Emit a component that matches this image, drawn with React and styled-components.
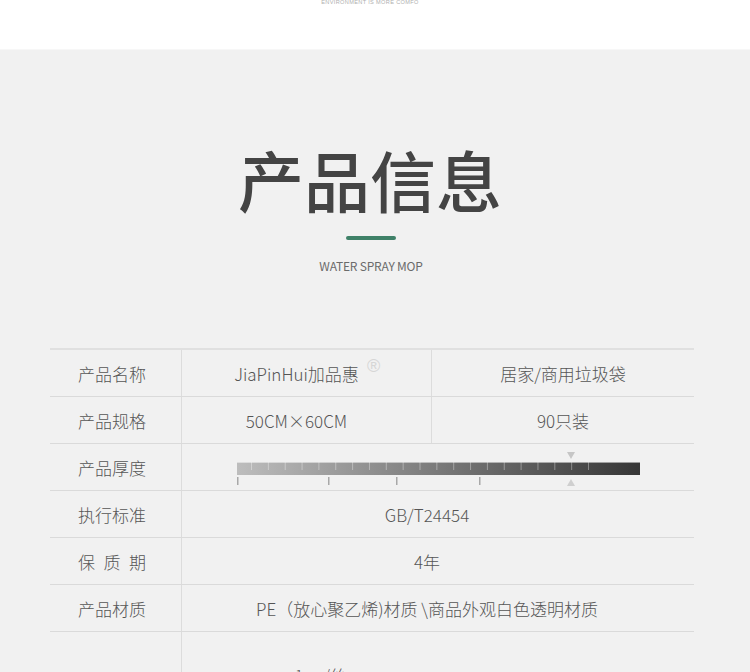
import { createGlobalStyle, styled } from "styled-components";

const GlobalStyle = createGlobalStyle`
  html, body {
    margin: 0;
    padding: 0;
    background: #f1f1f1;
  }
  body {
    font-family: "Noto Sans CJK SC", "Noto Sans", sans-serif;
    overflow: hidden;
  }
`;

const TICKS = Array.from({ length: 21 }, (_, i) => 14 + i * 16.85);
const SCALE = [0, 91, 159, 242];

const ThicknessGauge = () => (
  <svg width="404" height="40" viewBox="0 0 404 40">
    <defs>
      <linearGradient id="thick" x1="0" x2="1" y1="0" y2="0">
        <stop offset="0" stopColor="#bdbdbd" />
        <stop offset="1" stopColor="#363636" />
      </linearGradient>
    </defs>
    <polygon points="330,6 338,6 334,13" fill="#c6c6c6" />
    <rect x="0" y="16" width="403" height="13" fill="url(#thick)" />
    <rect x="0" y="16" width="403" height="1" fill="#ffffff" opacity="0.5" />
    {TICKS.map((x) => (
      <rect key={x} x={x} y="16" width="1" height="8" fill="#ffffff" opacity="0.35" />
    ))}
    {SCALE.map((x) => (
      <rect key={x} x={x} y="31" width="1.5" height="8" fill="#a8a8a8" />
    ))}
    <polygon points="330,40 338,40 334,33" fill="#cfcfcf" />
  </svg>
);

const rows = [
  { label: "产品名称", split: ["JiaPinHui加品惠", "居家/商用垃圾袋"], mark: true },
  { label: "产品规格", split: ["50CM×60CM", "90只装"] },
  { label: "产品厚度", gauge: true },
  { label: "执行标准", value: "GB/T24454" },
  { label: "保质期", value: "4年" },
  { label: "产品材质", value: "PE（放心聚乙烯)材质 \\商品外观白色透明材质" },
];

export default function App() {
  return (
    <Page>
      <GlobalStyle />
      <Header>
        <Tagline>ENVIRONMENT IS MORE COMFO</Tagline>
      </Header>
      <Section>
        <Title>产品信息</Title>
        <Accent />
        <Subtitle>WATER SPRAY MOP</Subtitle>
        <Table>
          {rows.map((row) => (
            <Row key={row.label}>
              <Label>
                <LabelText>{row.label}</LabelText>
              </Label>
              {row.split && (
                <Split>
                  <Value $offset={20}>
                    {row.split[0]}
                    {row.mark && <Registered>®</Registered>}
                  </Value>
                  <Value $offset={0}>{row.split[1]}</Value>
                </Split>
              )}
              {row.gauge && (
                <GaugeCell>
                  <ThicknessGauge />
                </GaugeCell>
              )}
              {row.value && <Value $offset={22}>{row.value}</Value>}
            </Row>
          ))}
          <LastRow>
            <Label />
            <Note>≈1cm/丝：</Note>
          </LastRow>
        </Table>
      </Section>
    </Page>
  );
}

const Page = styled.div`
  width: 750px;
  height: 672px;
  overflow: hidden;
`;

const Header = styled.header`
  height: 50px;
  background: #ffffff;
  border-bottom: 1px solid #f7f7f7;
  box-sizing: border-box;
  display: flex;
  justify-content: center;
`;

const Tagline = styled.div`
  margin-top: -2px;
  margin-left: -10px;
  font-family: "Liberation Sans", sans-serif;
  font-size: 5.6px;
  line-height: 8px;
  letter-spacing: 0.35px;
  color: #b0b0b0;
`;

const Section = styled.section`
  padding-top: 95px;
  display: flex;
  flex-direction: column;
  align-items: center;
`;

const Title = styled.h1`
  margin: 0;
  margin-left: -10px;
  font-size: 66px;
  line-height: 66px;
  font-weight: 500;
  color: #444444;
  letter-spacing: 0;
`;

const Accent = styled.div`
  width: 50px;
  height: 4px;
  border-radius: 2px;
  background: #3f8168;
  margin-top: 25px;
  margin-left: -8px;
`;

const Subtitle = styled.div`
  margin-top: 20px;
  margin-left: -8px;
  font-size: 12px;
  line-height: 12px;
  color: #6b6b6b;
  letter-spacing: -0.2px;
`;

const Table = styled.div`
  margin-top: 76px;
  width: 644px;
  margin-left: -6px;
  border-top: 2px solid #e0e0e0;
`;

const Row = styled.div`
  display: grid;
  grid-template-columns: 132px 1fr;
  height: 47px;
  box-sizing: border-box;
  border-bottom: 1px solid #dadada;
`;

const Label = styled.div`
  display: flex;
  align-items: center;
  padding-left: 28px;
  border-right: 1px solid #dcdcdc;
`;

const LabelText = styled.span`
  width: 68px;
  font-size: 17px;
  font-weight: 300;
  color: #555555;
  text-align: justify;
  text-align-last: justify;
`;

const Split = styled.div`
  display: grid;
  grid-template-columns: 250px 1fr;
  & > div:first-child {
    border-right: 1px solid #dcdcdc;
  }
`;

const Value = styled.div`
  display: flex;
  align-items: center;
  justify-content: center;
  padding-right: ${(p) => p.$offset}px;
  font-size: 17px;
  font-weight: 300;
  color: #555555;
  position: relative;
`;

const Registered = styled.span`
  position: absolute;
  left: 185px;
  top: 7px;
  font-family: "Liberation Sans", sans-serif;
  font-size: 18px;
  line-height: 18px;
  font-weight: 400;
  color: #d6d6d6;
`;

const GaugeCell = styled.div`
  display: flex;
  justify-content: center;
  padding-top: 2px;
  padding-left: 2px;
`;

const LastRow = styled.div`
  display: grid;
  grid-template-columns: 132px 1fr;
  height: 60px;
`;

const Note = styled.div`
  padding-top: 32px;
  padding-left: 98px;
  font-size: 15px;
  font-weight: 300;
  color: #555555;
`;
